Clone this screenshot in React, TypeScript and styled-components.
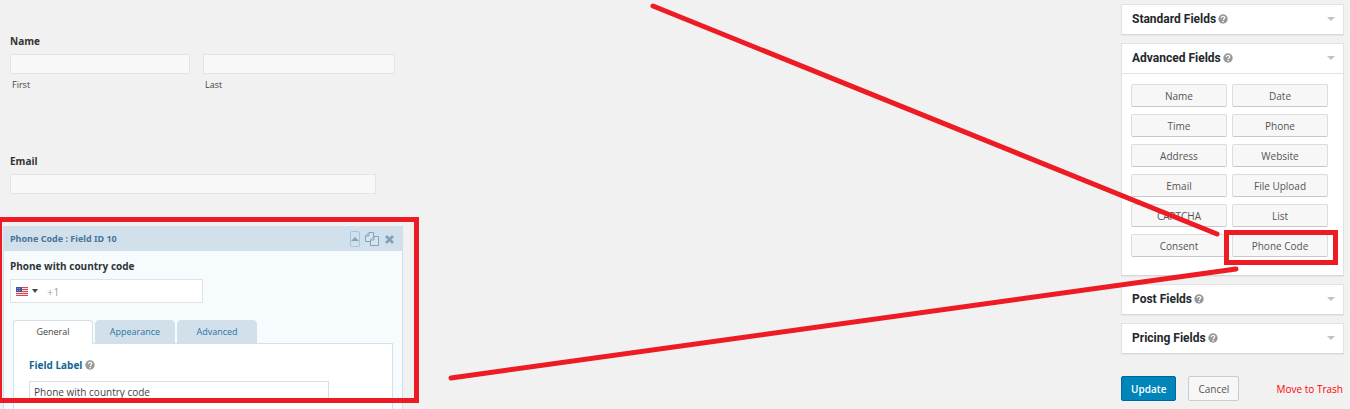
import React from "react";
import styled, { createGlobalStyle } from "styled-components";

const GlobalStyle = createGlobalStyle`
  *, *::before, *::after { box-sizing: border-box; }
  body {
    margin: 0;
    background: #f1f1f1;
    color: #444;
    font-family: "Open Sans", "Noto Sans", sans-serif;
    font-size: 10px;
    line-height: 16px;
  }
  button, input { font: inherit; color: inherit; margin: 0; }
  button { padding: 0; cursor: pointer; }
`;

const Page = styled.div`
  position: relative;
  display: flex;
  justify-content: space-between;
  height: 100vh;
  overflow: hidden;
`;

const FormColumn = styled.main`
  flex: 0 0 400px;
  margin-left: 3px;
  padding-top: 33px;
`;

const Field = styled.div<{ $space: number }>`
  padding: 0 7px;
  margin-bottom: ${(p) => p.$space}px;
`;

const FieldLabel = styled.label`
  display: block;
  margin-bottom: 5px;
  font-weight: 700;
  color: #333;
`;

const NameRow = styled.div`
  display: grid;
  grid-template-columns: 180px 192px;
  gap: 13px;
`;

const SubLabel = styled.label`
  display: block;
  padding: 3px 2px 0;
  font-size: 9px;
`;

const PreviewInput = styled.input<{ $width?: string }>`
  display: block;
  width: ${(p) => p.$width ?? "100%"};
  height: 20px;
  padding: 0 6px;
  border: 1px solid #e4e4e4;
  background: #f8f8f8;
`;

const Card = styled.section`
  border: 1px solid #d2e0eb;
  background: #f6fbfe;
`;

const CardHeader = styled.header`
  display: flex;
  align-items: center;
  justify-content: space-between;
  height: 24px;
  padding: 0 8px 0 6px;
  background: #d2e0eb;
  color: #47759b;
`;

const CardTitle = styled.h2`
  margin: 0;
  font: 700 9px/16px "Noto Sans", sans-serif;
`;

const CardActions = styled.div`
  display: flex;
  align-items: center;
  gap: 5px;
`;

const IconButton = styled.button<{ $focused?: boolean }>`
  display: flex;
  align-items: center;
  justify-content: center;
  min-width: 10px;
  height: 16px;
  border: ${(p) => (p.$focused ? "1px solid #9cc8ec" : "0")};
  border-radius: 2px;
  background: none;
  color: #7fa3be;
`;

const CardBody = styled.div`
  padding: 7px 9px 0 6px;
`;

const PhoneBox = styled.div`
  display: flex;
  align-items: center;
  width: 193px;
  height: 24px;
  border: 1px solid #dfe3e6;
  background: #fff;
`;

const CountryButton = styled.button`
  display: flex;
  align-items: center;
  gap: 4px;
  height: 100%;
  padding: 0 5px;
  border: 0;
  background: none;
`;

const PhoneInput = styled.input`
  flex: 1;
  min-width: 0;
  padding: 2px 0 0 4px;
  border: 0;
  background: none;
  font-size: 11px;
  &::placeholder { color: #a5a5a5; }
`;

const Settings = styled.div`
  margin: 17px 0 0 3px;
`;

const Tabs = styled.div`
  display: flex;
  gap: 2px;
`;

const Tab = styled.button<{ $active?: boolean }>`
  width: 80px;
  height: 24px;
  margin-bottom: -1px;
  border: 1px solid #d2e0eb;
  border-bottom-color: ${(p) => (p.$active ? "#fff" : "#d2e0eb")};
  border-radius: 4px 4px 0 0;
  background: ${(p) => (p.$active ? "#fff" : "#d2e0eb")};
  color: ${(p) => (p.$active ? "#444" : "#2b73a3")};
  font-size: 9px;
`;

const TabPanel = styled.div`
  padding: 13px 15px 40px;
  border: 1px solid #d2e0eb;
  background: #fff;
`;

const SettingHead = styled.div`
  display: flex;
  align-items: center;
  gap: 3px;
  margin-bottom: 8px;
  color: #999;
`;

const SettingLabel = styled.label`
  color: #0f6796;
  font-weight: 700;
`;

const SettingInput = styled.input`
  display: block;
  width: 300px;
  height: 22px;
  padding: 0 4px;
  border: 1px solid #ddd;
  background: #fff;
`;

const Sidebar = styled.aside`
  display: flex;
  flex-direction: column;
  gap: 8px;
  flex: 0 0 223px;
  margin: 4px 6px 0 0;
`;

const Panel = styled.section`
  border: 1px solid #e2e2e2;
  border-bottom-color: #d8d8d8;
  box-shadow: 0 1px 1px rgba(0, 0, 0, 0.04);
  background: #fff;
`;

const PanelHeader = styled.header`
  display: flex;
  align-items: center;
  gap: 2px;
  height: 29px;
  padding: 0 8px 2px 10px;
  color: #999;
`;

const PanelTitle = styled.h3`
  margin: 0;
  color: #23282d;
  font: 700 12px/16px Roboto, sans-serif;
`;

const PanelToggle = styled.button`
  display: flex;
  align-items: center;
  margin-left: auto;
  border: 0;
  background: none;
  color: #bfc3c6;
`;

const FieldGrid = styled.div`
  display: grid;
  grid-template-columns: 1fr 1fr;
  gap: 7px 5px;
  padding: 10px 15px 18px 9px;
  border-top: 1px solid #e2e2e2;
`;

const FieldButton = styled.button`
  height: 23px;
  border: 1px solid #dcdcdc;
  border-bottom-color: #c8c8c8;
  border-radius: 2px;
  background: #f7f7f7;
  color: #555;
`;

const Actions = styled.div`
  display: flex;
  align-items: center;
  margin-top: 14px;
`;

const ActionButton = styled.button<{ $primary?: boolean }>`
  height: 25px;
  padding: 0 9px;
  margin-right: 12px;
  border: 1px solid ${(p) => (p.$primary ? "#006799" : "#ccc")};
  border-radius: 2px;
  background: ${(p) => (p.$primary ? "#0085ba" : "#f7f7f7")};
  color: ${(p) => (p.$primary ? "#fff" : "#555")};
  font-weight: ${(p) => (p.$primary ? 600 : 400)};
`;

const TrashLink = styled.a`
  margin-left: auto;
  padding-right: 1px;
  color: #f00;
  text-decoration: none;
`;

const Annotations = styled.svg`
  position: absolute;
  inset: 0;
  width: 100%;
  height: 100%;
  pointer-events: none;
`;

const HelpIcon = () => (
  <svg width="10" height="10" viewBox="0 0 18 18" aria-hidden="true">
    <circle cx="9" cy="9" r="8.5" fill="currentColor" />
    <path d="M5.8 7.2C5.8 3.5 12.2 3.5 12.2 6.8c0 2.2-3 2.2-3 4.4" fill="none" stroke="#fff" strokeWidth="2" />
    <path d="M8 12.6h2.4V15H8z" fill="#fff" />
  </svg>
);

const Triangle = ({ up = false, width = 8 }: { up?: boolean; width?: number }) => (
  <svg width={width} height="4" viewBox="0 0 8 4" preserveAspectRatio="none" aria-hidden="true">
    <path d={up ? "M0 4 4 0l4 4z" : "M0 0h8L4 4z"} fill="currentColor" />
  </svg>
);

const CopyIcon = () => (
  <svg width="14" height="14" viewBox="0 0 14 14" fill="#d8e5ee" stroke="currentColor" aria-hidden="true">
    <path d="M4 .5h4.5v9h-8V4zM4 .5V4H.5" />
    <path d="M9 4.5h4.5v9h-8V8zM9 4.5V8H5.5" />
  </svg>
);

const CloseIcon = () => (
  <svg width="9" height="9" viewBox="0 0 9 9" aria-hidden="true">
    <path d="m1 1 7 7M8 1 1 8" stroke="currentColor" strokeWidth="2.8" />
  </svg>
);

const Flag = () => (
  <svg width="12" height="9" viewBox="0 0 12 9" aria-hidden="true">
    <path d="M0 0h12v9H0z" fill="#f3dfe1" />
    <path d="M0 .5h12M0 2.5h12M0 4.5h12M0 6.5h12M0 8.5h12" stroke="#d8444f" />
    <path d="M0 0h6v5H0z" fill="#44549c" />
    <path d="M1 1.5h4M1 3.5h4" stroke="#8c98c8" strokeDasharray="1 1" />
  </svg>
);

const advancedFields = [
  "Name", "Date", "Time", "Phone", "Address", "Website",
  "Email", "File Upload", "CAPTCHA", "List", "Consent", "Phone Code",
];

const FieldPanel = ({ title, children }: { title: string; children?: React.ReactNode }) => (
  <Panel>
    <PanelHeader>
      <PanelTitle>{title}</PanelTitle>
      <HelpIcon />
      <PanelToggle type="button" aria-label={`Toggle ${title}`}>
        <Triangle />
      </PanelToggle>
    </PanelHeader>
    {children}
  </Panel>
);

export default function App() {
  return (
    <Page>
      <GlobalStyle />
      <FormColumn>
        <Field $space={60}>
          <FieldLabel as="div" id="name-label">Name</FieldLabel>
          <NameRow role="group" aria-labelledby="name-label">
            <div>
              <PreviewInput id="first" />
              <SubLabel htmlFor="first">First</SubLabel>
            </div>
            <div>
              <PreviewInput id="last" />
              <SubLabel htmlFor="last">Last</SubLabel>
            </div>
          </NameRow>
        </Field>
        <Field $space={32}>
          <FieldLabel htmlFor="email">Email</FieldLabel>
          <PreviewInput id="email" type="email" $width="366px" />
        </Field>
        <Card>
          <CardHeader>
            <CardTitle>Phone Code : Field ID 10</CardTitle>
            <CardActions>
              <IconButton type="button" $focused aria-label="Collapse field">
                <Triangle up />
              </IconButton>
              <IconButton type="button" aria-label="Duplicate field"><CopyIcon /></IconButton>
              <IconButton type="button" aria-label="Delete field"><CloseIcon /></IconButton>
            </CardActions>
          </CardHeader>
          <CardBody>
            <FieldLabel htmlFor="phone">Phone with country code</FieldLabel>
            <PhoneBox>
              <CountryButton type="button" aria-label="United States, select country">
                <Flag />
                <Triangle width={6} />
              </CountryButton>
              <PhoneInput id="phone" type="tel" placeholder="+1" />
            </PhoneBox>
            <Settings>
              <Tabs role="tablist">
                <Tab type="button" role="tab" aria-selected="true" $active>General</Tab>
                <Tab type="button" role="tab" aria-selected="false">Appearance</Tab>
                <Tab type="button" role="tab" aria-selected="false">Advanced</Tab>
              </Tabs>
              <TabPanel role="tabpanel">
                <SettingHead>
                  <SettingLabel htmlFor="field-label">Field Label</SettingLabel>
                  <HelpIcon />
                </SettingHead>
                <SettingInput id="field-label" defaultValue="Phone with country code" />
              </TabPanel>
            </Settings>
          </CardBody>
        </Card>
      </FormColumn>
      <Sidebar>
        <FieldPanel title="Standard Fields" />
        <FieldPanel title="Advanced Fields">
          <FieldGrid>
            {advancedFields.map((name) => (
              <FieldButton key={name} type="button">{name}</FieldButton>
            ))}
          </FieldGrid>
        </FieldPanel>
        <FieldPanel title="Post Fields" />
        <FieldPanel title="Pricing Fields" />
        <Actions>
          <ActionButton type="button" $primary>Update</ActionButton>
          <ActionButton type="button">Cancel</ActionButton>
          <TrashLink href="#trash">Move to Trash</TrashLink>
        </Actions>
      </Sidebar>
      <Annotations viewBox="0 0 1350 409" fill="none" stroke="#ed1c24" strokeWidth="5" aria-hidden="true">
        <path d="M0 219.5h416.5v181H0" />
        <path d="M1 217v186" strokeWidth="2" />
        <path d="M1226.5 232.5h109v30h-109z" />
        <path d="m653 6 564 228M451 378l785-109" strokeLinecap="round" />
      </Annotations>
    </Page>
  );
}
